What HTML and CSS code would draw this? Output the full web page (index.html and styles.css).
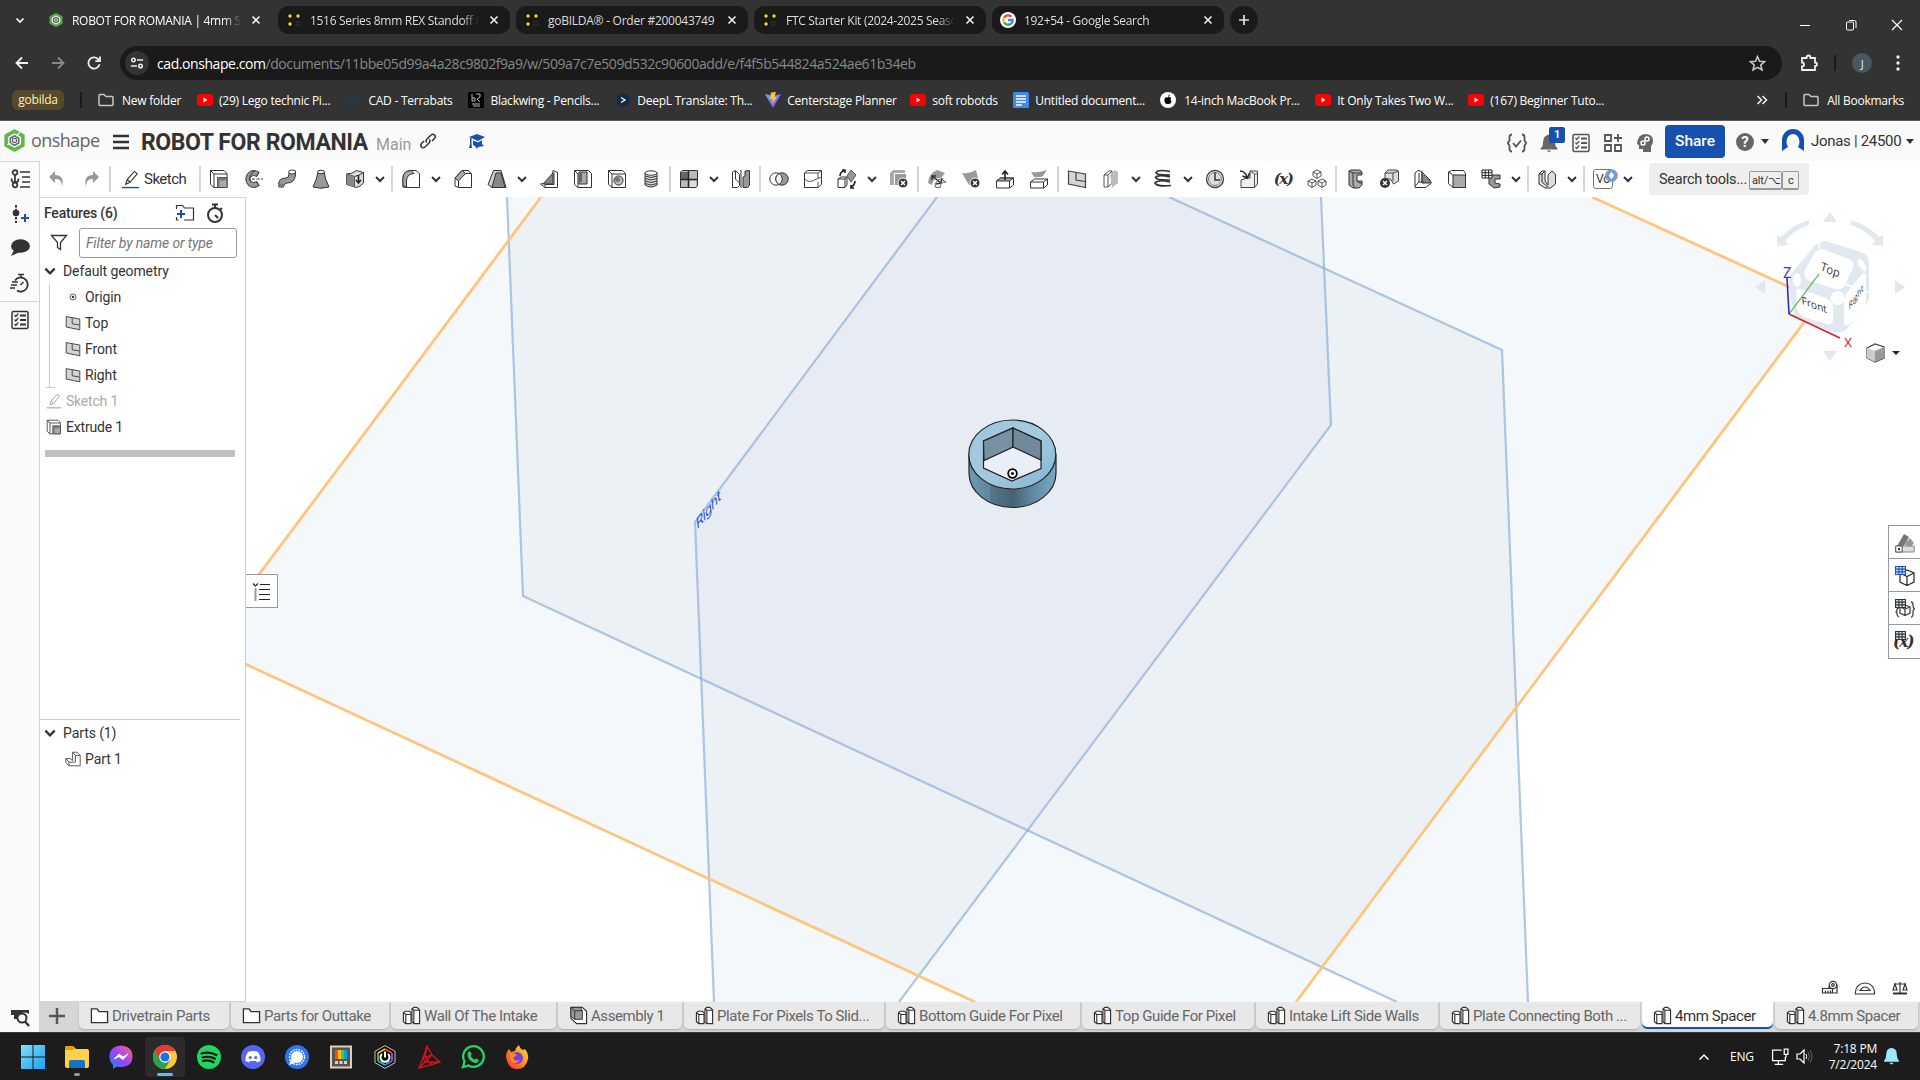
FILE: index.html
```html
<!DOCTYPE html>
<html lang="en">
<head>
<meta charset="utf-8">
<title>ROBOT FOR ROMANIA | 4mm Spacer</title>
<link rel="stylesheet" href="styles.css">
</head>
<body>
<svg class="defs" width="0" height="0">
  <defs>
    <linearGradient id="gWin" x1="0" y1="0" x2="1" y2="1"><stop offset="0" stop-color="#7fe0fb"/><stop offset="1" stop-color="#1da1f2"/></linearGradient>
    <linearGradient id="gMsg" x1="0" y1="1" x2="1" y2="0"><stop offset="0" stop-color="#0a8bff"/><stop offset=".5" stop-color="#a040ff"/><stop offset="1" stop-color="#ff6a68"/></linearGradient>
    <linearGradient id="gFox" x1="1" y1="0" x2="0" y2="1"><stop offset="0" stop-color="#ffe63d"/><stop offset=".5" stop-color="#ff8a1f"/><stop offset="1" stop-color="#f0264e"/></linearGradient>
    <linearGradient id="gVite" x1="0" y1="0" x2="1" y2="1"><stop offset="0" stop-color="#41c4ff"/><stop offset="1" stop-color="#b02cfe"/></linearGradient>
    <linearGradient id="gRing" x1="0" y1="0" x2="1" y2="0"><stop offset="0" stop-color="#6d9ab5"/><stop offset=".24" stop-color="#61869c"/><stop offset=".25" stop-color="#567689"/><stop offset=".5" stop-color="#486273"/><stop offset=".75" stop-color="#618ba5"/><stop offset="1" stop-color="#7aa9c4"/></linearGradient>
    <linearGradient id="gTop" x1="0" y1="0" x2="1" y2="1"><stop offset="0" stop-color="#9fc6de"/><stop offset=".5" stop-color="#a4cadf"/><stop offset="1" stop-color="#80b5d3"/></linearGradient>
    <clipPath id="clipTop"><path d="M541 197L200 653.500V643l775 359h321l524-701-228-104z"/></clipPath>
    <clipPath id="clipFront"><path d="M507 197l16 399 874 406h131l-26-652-333-153z"/></clipPath>
  </defs>
  <symbol id="chev" viewBox="0 0 12 12"><path d="M2 4l4 4 4-4" fill="none" stroke="#333" stroke-width="2"/></symbol>
  <symbol id="hex" viewBox="0 0 20 22"><path d="M10 2l8 4.600v9L10 20l-8-4.500V6.600z" fill="none" stroke="#5cb947" stroke-width="3.400"/><path d="M10 6.500l4 2.300v4.600l-4 2.300-4-2.300V8.800z" fill="none" stroke="#63666a" stroke-width="1.500"/><circle cx="10" cy="11" r="2" fill="none" stroke="#63666a" stroke-width="1.200"/><path d="M15 3l-3 4M3 15l4-1" stroke="#fff" stroke-width="1"/></symbol>
  <symbol id="hexd" viewBox="0 0 20 22"><path d="M10 1l9 5v10l-9 5-9-5V6z" fill="#4fa843"/><path d="M10 5.500l5 2.800v5.400l-5 2.800-5-2.800V8.300z" fill="#555" stroke="#e8e8e8" stroke-width="1.800"/><circle cx="10" cy="11" r="2" fill="none" stroke="#eee" stroke-width="1.200"/></symbol>
  <symbol id="gb" viewBox="0 0 16 16"><g fill="#161616"><circle cx="4" cy="4" r="3.500"/><circle cx="12" cy="4" r="3.500"/><circle cx="4" cy="12" r="3.500"/></g><g fill="#ffe000"><circle cx="4" cy="4" r="1.700"/><circle cx="12" cy="4" r="1.700"/><circle cx="4" cy="12" r="1.700"/></g><path d="M9 10h6M9 13h6" stroke="#333"/></symbol>
  <symbol id="yt" viewBox="0 0 16 16"><rect y="2" width="16" height="12" rx="3" fill="#f00"/><path d="M6.500 5.500v5l4-2.500z" fill="#fff"/></symbol>
  <symbol id="cfolder" viewBox="0 0 16 16"><path d="M1 3.500q0-1 1-1h4l2 2h6q1 0 1 1v7q0 1-1 1H2q-1 0-1-1z" fill="none" stroke="#c7c7c7" stroke-width="1.500"/></symbol>
  <symbol id="x" viewBox="0 0 10 10"><path d="M1.500 1.500l7 7M8.500 1.500l-7 7" stroke="currentColor" stroke-width="1.600"/></symbol>
  <symbol id="extrude" viewBox="0 0 20 20"><path d="M1.500 1.500H15l3 3v14H5l-3.500-3z" fill="#fff" stroke="#333"/><path d="M1.500 1.500L5 5v13.500M5 5h13" fill="none" stroke="#333"/><path d="M8.500 8.500h9.500v10H8.500z" fill="#aaa" stroke="#444"/><path d="M8.500 8.500h9.500l-2 3h-5.500v7h-2z" fill="#777"/></symbol>
  <symbol id="revolve" viewBox="0 0 20 20"><path d="M16 3.500A8 8.500 0 1 0 16 16.500l-2.500-4a4 3.500 0 1 1 0-5z" fill="#999" stroke="#333"/><path d="M12 1.500Q5 6 7.500 12.500M16 3.500l-2.500 4M16 16.500l-2.500-4" fill="none" stroke="#333"/><path d="M9 10h11" stroke="#333" stroke-dasharray="3 1.500"/></symbol>
  <symbol id="sweep" viewBox="0 0 20 20"><path d="M2 18q-2-9 7-9 3 0 3-4V3l6.500-1v4q-1 8-8 8-4 0-4 4z" fill="#999" stroke="#333"/><ellipse cx="15.200" cy="3" rx="3.500" ry="2" fill="#fff" stroke="#333"/><ellipse cx="4.300" cy="16.500" rx="2.500" ry="2" fill="#777"/></symbol>
  <symbol id="loft" viewBox="0 0 20 20"><path d="M7 3Q6 10 2 18q8 2.500 16 0-4-8-5-15z" fill="#999" stroke="#333"/><ellipse cx="10" cy="3" rx="3.500" ry="1.800" fill="#eee" stroke="#333"/></symbol>
  <symbol id="thicken" viewBox="0 0 20 20"><path d="M1.500 5q6 0 10-3.500l7 2V14q-4 4-7 4.500l-10-3z" fill="#ddd" stroke="#333"/><path d="M1.500 5l8 2.500q5-1 9-4M9.500 7.500V18" fill="none" stroke="#333"/><path d="M1.500 5l8 2.500V18l-8-2.500z" fill="#888"/><path d="M13.500 6v7m-2.500-2l2.500 3 2.500-3" fill="none" stroke="#222" stroke-width="1.600"/></symbol>
  <symbol id="fillet" viewBox="0 0 20 20"><path d="M2 18V9q0-7 8-7.500h5l3.500 3V18.500H5.500z" fill="#fff" stroke="#333"/><path d="M2 9q0-7 8-7.500l3 3Q5.500 5 5.500 12v6L2 17z" fill="#aaa" stroke="#333"/></symbol>
  <symbol id="chamfer" viewBox="0 0 20 20"><path d="M2 17V9l7-7.500h6l3.500 3v14H5.500z" fill="#fff" stroke="#333"/><path d="M2 9l7-7.500 3.500 3L5.500 12z" fill="#aaa" stroke="#333"/><path d="M5.500 12v6.500M12 4.500h6" stroke="#333"/></symbol>
  <symbol id="draft" viewBox="0 0 20 20"><path d="M6.500 1.500H14l5 17H5l-4-3z" fill="#ccc" stroke="#333"/><path d="M9 4h5l4 14.500H5z" fill="#888" stroke="#333"/></symbol>
  <symbol id="rib" viewBox="0 0 20 20"><path d="M14 1.500l4.500 2v15H6L1.500 15l11-2z" fill="#fff" stroke="#333"/><path d="M14 4v11H4Z" fill="#888" stroke="#333"/><path d="M6 18.500v-3h9v-12" fill="none" stroke="#333"/></symbol>
  <symbol id="shell" viewBox="0 0 20 20"><path d="M1.500 1.500h14l3 3v14H5l-3.500-3z" fill="#fff" stroke="#333"/><path d="M6 3h8v12H6z" fill="#aaa" stroke="#333"/><path d="M6 3h3v10H6z" fill="#666"/><path d="M2 2l3 3v13" fill="none" stroke="#333"/></symbol>
  <symbol id="hole" viewBox="0 0 20 20"><path d="M1.500 1.500h14l3 3v14H5l-3.500-3z" fill="#fff" stroke="#333"/><path d="M1.500 1.500L5 5v13.500M5 5h13" fill="none" stroke="#333"/><circle cx="11.500" cy="11.500" r="4.600" fill="#bbb" stroke="#333"/><circle cx="10.500" cy="10.500" r="2.500" fill="#777"/></symbol>
  <symbol id="thread" viewBox="0 0 20 20"><path d="M4 4v12q6 4 12 0V4z" fill="#ddd" stroke="#333"/><path d="M4 7q6 3 12 0M4 9.500q6 3 12 0M4 12q6 3 12 0M4 14.500q6 3 12 0" fill="none" stroke="#333"/><ellipse cx="10" cy="4" rx="6" ry="2.200" fill="#fff" stroke="#333"/></symbol>
  <symbol id="pattern" viewBox="0 0 20 20"><path d="M1.500 3l2-1.500h15v15L17 18.500H1.500z" fill="#bbb" stroke="#333"/><path d="M2 3h7v7H2z" fill="#666"/><path d="M10.500 11.500h6.500v6.500h-6.500z" fill="#ddd"/><path d="M9.500 2v16M2 10.500h16" stroke="#222" stroke-width="1.500"/></symbol>
  <symbol id="mirror" viewBox="0 0 20 20"><path d="M1.500 3l3-1.500 4 4v11l-2 2h-5z" fill="#fff" stroke="#333"/><path d="M12 8l2-1V2l4.500-.5v15l-2 2h-4.500z" fill="#999" stroke="#333"/><path d="M10 1v18" stroke="#777" stroke-width="1.500"/><path d="M4.500 2v8l4 4" fill="none" stroke="#333"/></symbol>
  <symbol id="boolean" viewBox="0 0 20 20"><circle cx="7" cy="10" r="6.200" fill="#fff" stroke="#333"/><circle cx="13" cy="10" r="6.200" fill="#999" stroke="#333"/><path d="M10 4.500a6.200 6.200 0 0 1 0 11 6.200 6.200 0 0 1 0-11z" fill="#eee" stroke="#333"/></symbol>
  <symbol id="split" viewBox="0 0 20 20"><path d="M1.500 4l3-2.500h14v14l-3.500 3H1.500z" fill="#fff" stroke="#333"/><path d="M1.500 4H15l3.500-2.500M15 4v5M15 13v5M1.500 10q4 4 8 2t9-4" fill="none" stroke="#555"/></symbol>
  <symbol id="transform" viewBox="0 0 20 20"><path d="M1 10l3-2h6v8l-2 2.500H1zM1 10h7v8M8 10l2-2" fill="#fff" stroke="#333"/><path d="M14 1l5 5-5 7-4-6z" fill="#999" stroke="#555"/><path d="M3 7q0-4 4-5M5 1h3v3M18 12q0 4-4 6M17 19h-3v-3" fill="none" stroke="#222" stroke-width="1.600"/></symbol>
  <symbol id="delpart" viewBox="0 0 20 20"><path d="M1 4l3-3h12v3H5v12H1z" fill="#aaa"/><path d="M6 5h11v11H6z" fill="#999"/><circle cx="14" cy="14" r="5" fill="#333" stroke="#fff"/><path d="M12 12l4 4m0-4l-4 4" stroke="#fff" stroke-width="1.500"/></symbol>
  <symbol id="modfillet" viewBox="0 0 20 20"><path d="M1 14Q2 4 10 1l8 3-4 5Q6 8 5 16z" fill="#999"/><path d="M8 18q0-7 6-8l5 3q-6 0-6 6z" fill="#eee" stroke="#666"/><path d="M5 7l9 7M9 15l5-1 1-5M5 11V7h4" fill="none" stroke="#333" stroke-width="1.400"/></symbol>
  <symbol id="delface" viewBox="0 0 20 20"><path d="M1 4q6 1 14-3l3 12q-5 0-10 3z" fill="#999"/><circle cx="14" cy="14" r="5" fill="#333" stroke="#fff"/><path d="M12 12l4 4m0-4l-4 4" stroke="#fff" stroke-width="1.500"/></symbol>
  <symbol id="moveface" viewBox="0 0 20 20"><path d="M1.500 12l4-3h13v7l-4 3h-13z" fill="#fff" stroke="#333"/><path d="M1.500 12l4-3h13l-4 3z" fill="#aaa" stroke="#333"/><path d="M14.500 12v7" stroke="#333"/><path d="M10 11V3M7 5.500L10 2l3 3.500" fill="none" stroke="#222" stroke-width="1.600"/></symbol>
  <symbol id="repface" viewBox="0 0 20 20"><path d="M1.500 13l4-3h13v6l-4 3h-13zM1.500 13h13l4-3M14.500 13v6" fill="#fff" stroke="#333"/><path d="M2 3q8 1 16-2l-4 6q-4 2-9 1z" fill="#999"/></symbol>
  <symbol id="plane" viewBox="0 0 20 20"><path d="M1.500 2l17 3v13.500l-17-3.500z" fill="#d4d4d4" stroke="#444" stroke-width="1.200"/><path d="M9 3.500v7.500l9 1.500" fill="none" stroke="#444" stroke-width="1.200"/></symbol>
  <symbol id="sheet" viewBox="0 0 20 20"><path d="M3 6l5-4h3v12l-4 4H3z" fill="#fff" stroke="#555"/><path d="M9 6l5-5 3 2v11l-6 5z" fill="#bbb"/><path d="M3 6h4l4-4M7 6v12" fill="none" stroke="#555"/></symbol>
  <symbol id="helix" viewBox="0 0 20 20"><path d="M17 2.500Q5 0 3 3.500 3 6 17 6M17 8Q5 5 2.500 8.500q1 3 14.500 2.500M17 13Q5 10 2 14q2 4 16 2.500" fill="none" stroke="#333" stroke-width="1.700"/></symbol>
  <symbol id="clock" viewBox="0 0 20 20"><circle cx="10" cy="10" r="8.500" fill="#fff" stroke="#444" stroke-width="1.400"/><circle cx="10" cy="10" r="6.500" fill="#ddd" stroke="#777"/><path d="M10 3.500V11h5" fill="none" stroke="#333" stroke-width="1.500"/></symbol>
  <symbol id="derived" viewBox="0 0 20 20"><path d="M8 9h3V2h7.500v13l-3 3.500H2V11z" fill="#eee" stroke="#444"/><path d="M15.500 5v13M11 2l4.500 3h3" fill="none" stroke="#555"/><path d="M1 2q5 0 7 6M3.500 7l5 2 2-5" fill="none" stroke="#222" stroke-width="1.500"/></symbol>
  <symbol id="cubes" viewBox="0 0 20 20"><g fill="#fff" stroke="#444" stroke-width=".9"><path d="M10 1l4 2v4l-4 2.500L6 7V3zM6 3l4 2 4-2M10 5v4.500"/><path d="M5 10l4 2v4l-4 2.500L1 16v-4zM1 12l4 2 4-2M5 14v4.500"/><path d="M15 10l4 2v4l-4 2.500L11 16v-4zM11 12l4 2 4-2M15 14v4.500"/></g></symbol>
  <symbol id="smetal" viewBox="0 0 20 20"><path d="M4 2l2-1h9l2 2v3h-5v6h5v4l-3 3H8l-4-3z" fill="#aaa" stroke="#333"/><path d="M4 2l4 2h9M8 4v12l2 3" fill="none" stroke="#333"/><path d="M12 12l3 2h2" fill="none" stroke="#333"/></symbol>
  <symbol id="smdel" viewBox="0 0 20 20"><path d="M6 4l3-3h9l1.500 2v9l-5 3-3-5H6z" fill="#ddd" stroke="#444"/><path d="M6 4h8l5.500-2M14 4v8" fill="none" stroke="#444"/><circle cx="6" cy="14" r="5" fill="#333"/><path d="M4 12l4 4m0-4l-4 4" stroke="#fff" stroke-width="1.500"/></symbol>
  <symbol id="flange" viewBox="0 0 20 20"><path d="M2 4l3-2.500 4 1V13h9l.5 1-6 4.500H2z" fill="#fff" stroke="#333"/><path d="M9 3l8 8v3H9z" fill="#888" stroke="#333"/><path d="M6 4v9l-4 4M6 13h5" fill="none" stroke="#333"/></symbol>
  <symbol id="block" viewBox="0 0 20 20"><path d="M1.500 3l3-1.500h12l2 3v14H6l-4.500-4z" fill="#fff" stroke="#333"/><path d="M6 6h12.500v12.500H6z" fill="#aaa" stroke="#333"/><path d="M1.500 3L6 6" stroke="#333"/></symbol>
  <symbol id="smtable" viewBox="0 0 20 20"><path d="M8 6h11v4h-5v4l5 1v3l-6 1-5-4z" fill="#999" stroke="#333"/><path d="M1 1h10v8H1zM1 3.700h10M1 6.400h10M4.300 1v8M7.600 1v8" fill="#fff" stroke="#222"/></symbol>
  <symbol id="frame" viewBox="0 0 20 20"><path d="M2 5l3-3h3v10l3 4V6l4-4 3.500 3v10l-5 4H8l-6-4z" fill="#ddd" stroke="#333"/><path d="M2 5h3l3-3M5 5v8l6 5" fill="none" stroke="#333"/></symbol>
  <symbol id="sk" viewBox="0 0 20 20"><path d="M5 15l1.500-5L14 1.500l3 2.500-7.500 9L5 15zM6.500 10l3 2.800" fill="#fff" stroke="#333" stroke-width="1.200"/><path d="M1 18.500h18" stroke="#1651b0" stroke-width="1.500"/></symbol>
  <symbol id="watch" viewBox="0 0 20 20"><circle cx="10" cy="12" r="7" fill="none" stroke="#333" stroke-width="2"/><path d="M7 1.500h6M10 1.500v4M10 12l3 3M15.500 5l1.500 1.500" stroke="#333" stroke-width="2"/></symbol>
  <symbol id="list" viewBox="0 0 20 20"><rect x="2" y="1.500" width="16" height="17" rx="1.500" fill="none" stroke="currentColor" stroke-width="1.500"/><path d="M10 5.500h6M10 10h6M10 14.500h6" stroke="currentColor" stroke-width="2"/><path d="M4.500 5l1.300 1.500 2.500-3M4.500 9.500L5.800 11l2.500-3M4.500 14l1.300 1.500 2.500-3" fill="none" stroke="currentColor" stroke-width="1.200"/></symbol>
  <symbol id="part" viewBox="0 0 20 20"><path d="M1.500 7l2-1.500h4l2 1.500v11.500H4l-2.500-2zM1.500 7L4 9h5.500M4 9v9.500" fill="#fff" stroke="#333" stroke-width="1.200"/><path d="M10.500 3l2-1.500h3l3 2.500v14.500h-6l-2-2zM10.500 3l2 1.500h6M12.500 4.500v14" fill="#fff" stroke="#333" stroke-width="1.200"/></symbol>
  <symbol id="fold" viewBox="0 0 20 20"><path d="M1.500 3h6l2 3h9v11.500h-17z" fill="#fff" stroke="#333" stroke-width="1.400"/></symbol>
  <symbol id="asm" viewBox="0 0 20 20"><path d="M2 1.500h12l4.500 4V18.500H8L2 13z" fill="#fff" stroke="#333" stroke-width="1.200"/><path d="M2 1.500h10L14 5v9H6l-4-3z" fill="#999" stroke="#333"/><path d="M6 5h8M6 5v9M2 1.500L6 5" stroke="#333"/></symbol>
  <symbol id="grid" viewBox="0 0 12 10"><path d="M.5.500h11v9H.5zM.5 3.500h11M.5 6.500h11M4.200.500v9M7.800.500v9" stroke="currentColor" fill="#cfe6fa" stroke-width="1.200"/></symbol>
</svg>

<header class="browser">
  <div class="tabstrip">
    <svg class="tabdrop" viewBox="0 0 10 10"><path d="M1.500 3.500L5 7l3.500-3.500" fill="none" stroke="#fff" stroke-width="1.600"/></svg>
    <div class="tab active"><svg class="fav"><use href="#hexd"/></svg><span>ROBOT FOR ROMANIA | 4mm S</span><svg class="close"><use href="#x"/></svg></div>
    <div class="tab"><svg class="fav"><use href="#gb"/></svg><span>1516 Series 8mm REX Standoff (</span><svg class="close"><use href="#x"/></svg></div>
    <div class="tab t3"><svg class="fav"><use href="#gb"/></svg><span>goBILDA® - Order #200043749</span><svg class="close"><use href="#x"/></svg></div>
    <div class="tab"><svg class="fav"><use href="#gb"/></svg><span>FTC Starter Kit (2024-2025 Seaso</span><svg class="close"><use href="#x"/></svg></div>
    <div class="tab"><svg class="fav" viewBox="0 0 16 16"><circle cx="8" cy="8" r="8" fill="#fff"/><g fill="none" stroke-width="2.300"><path d="M4 5.600A4.700 4.700 0 0 1 11.400 4.700" stroke="#ea4335"/><path d="M4 5.600a4.700 4.700 0 0 0 0 4.800" stroke="#fbbc05"/><path d="M4 10.400a4.700 4.700 0 0 0 7 1.300" stroke="#34a853"/><path d="M11 11.700A4.700 4.700 0 0 0 12.700 8H8" stroke="#4285f4"/></g></svg><span>192+54 - Google Search</span><svg class="close"><use href="#x"/></svg></div>
    <div class="newtab"><svg width="12" height="12" viewBox="0 0 12 12"><path d="M6 1v10M1 6h10" stroke="#e0e0e0" stroke-width="1.700"/></svg></div>
    <div class="winbtns">
      <svg viewBox="0 0 12 12"><path d="M1 6.500h10" stroke="#fff"/></svg>
      <svg viewBox="0 0 12 12"><path d="M1.500 4q0-1 1-1h5q1 0 1 1v6q0 1-1 1h-5q-1 0-1-1zM4 1.500h5.500q1.500 0 1.500 1.500v6" fill="none" stroke="#fff"/></svg>
      <svg viewBox="0 0 12 12"><path d="M1 1l10 10M11 1L1 11" stroke="#fff" stroke-width="1.200"/></svg>
    </div>
  </div>
  <div class="address">
    <svg class="nav" viewBox="0 0 16 16"><path d="M14 8H3M8 2.500L2.500 8 8 13.500" fill="none" stroke="#eee" stroke-width="1.800"/></svg>
    <svg class="nav" viewBox="0 0 16 16"><path d="M2 8h11M8 2.500L13.500 8 8 13.500" fill="none" stroke="#888" stroke-width="1.800"/></svg>
    <svg class="nav" viewBox="0 0 16 16"><path d="M13.500 9.200A5.600 5.600 0 1 1 12 4l1.500 1.500M14 1.500v4.700H9.300" fill="none" stroke="#eee" stroke-width="1.800"/></svg>
    <div class="omni">
      <div class="site"><svg viewBox="0 0 16 16" width="14" height="14"><g fill="none" stroke="#eee" stroke-width="1.800"><circle cx="4" cy="4.500" r="2"/><path d="M8 4.500h7M1 11.500h7"/><circle cx="12" cy="11.500" r="2"/></g></svg></div>
      <div class="url"><b>cad.onshape.com</b>/documents/11bbe05d99a4a28c9802f9a9/w/509a7c7e509d532c90600add/e/f4f5b544824a524ae61b34eb</div>
      <svg class="star" viewBox="0 0 16 16"><path d="M8 1.500l1.900 4.400 4.800.4-3.600 3.100 1.100 4.700L8 11.600l-4.200 2.500 1.100-4.700L1.300 6.300l4.800-.4z" fill="none" stroke="#c7c7c7" stroke-width="1.500"/></svg>
    </div>
    <svg class="ext" viewBox="0 0 18 18"><path d="M2 4h4.500q0-2.500 2-2.500t2 2.500H15v4.500q2 0 2 1.700t-2 1.800V16H2v-3.500q2 0 2-2t-2-2z" fill="none" stroke="#eee" stroke-width="1.800"/></svg>
    <i class="vline"></i>
    <div class="me">J</div>
    <svg class="dots" viewBox="0 0 4 16"><g fill="#eee"><circle cx="2" cy="2" r="1.700"/><circle cx="2" cy="8" r="1.700"/><circle cx="2" cy="14" r="1.700"/></g></svg>
  </div>
  <div class="bookmarks">
    <div class="group">gobilda</div><i class="vline"></i>
    <div class="bm"><svg><use href="#cfolder"/></svg><span>New folder</span></div>
    <div class="bm"><svg><use href="#yt"/></svg><span>(29) Lego technic Pi...</span></div>
    <div class="bm"><svg viewBox="0 0 16 16"><path d="M1 3l3.500 10L8 4l3.500 9L15 3" fill="none" stroke="#26394b" stroke-width="2"/></svg><span>CAD - Terrabats</span></div>
    <div class="bm"><svg viewBox="0 0 16 16"><path d="M0 0h16v16H0z"/><path d="M4 2v7h3V6H4M8 2h4v3l-3 2 3 3M4 12h8M5 14h7" stroke="#bbb" fill="none"/></svg><span>Blackwing - Pencils...</span></div>
    <div class="bm"><svg viewBox="0 0 16 16"><path d="M8 1l6 3.500v7L8 15l-6-3.500v-7z" fill="#0f2b46"/><path d="M6 5.500l4 2.500-4 2.500" fill="none" stroke="#fff" stroke-width="1.300"/></svg><span>DeepL Translate: Th...</span></div>
    <div class="bm"><svg viewBox="0 0 16 16"><path d="M0 2l8 14 8-14-8 2z" fill="url(#gVite)"/><path d="M6 .5L11 0 9.500 5H12l-5 7 1-5H5z" fill="#ffc62b"/></svg><span>Centerstage Planner</span></div>
    <div class="bm"><svg><use href="#yt"/></svg><span>soft robotds</span></div>
    <div class="bm"><svg viewBox="0 0 16 16"><rect width="16" height="16" rx="1.500" fill="#4285f4"/><path d="M3 4h10M3 7h10M3 10h10M3 13h6" stroke="#fff" stroke-width="1.500"/></svg><span>Untitled document...</span></div>
    <div class="bm"><svg viewBox="0 0 16 16"><circle cx="8" cy="8" r="8" fill="#fff"/><path d="M8 5.500q2-1 3.200.6-1.600 1.500.4 3.400Q10.200 13 8 11.800 5.600 13 4.500 9.500 3.900 4.500 8 5.500zM8 5q0-2 1.800-2.500Q10 4.500 8 5z"/></svg><span>14-inch MacBook Pr...</span></div>
    <div class="bm"><svg><use href="#yt"/></svg><span>It Only Takes Two W...</span></div>
    <div class="bm"><svg><use href="#yt"/></svg><span>(167) Beginner Tuto...</span></div>
    <svg class="more" viewBox="0 0 12 12"><path d="M1.500 2l4 4-4 4M6.500 2l4 4-4 4" fill="none" stroke="#eee" stroke-width="1.600"/></svg>
    <i class="vline"></i>
    <div class="bm all"><svg><use href="#cfolder"/></svg><span>All Bookmarks</span></div>
  </div>
</header>

<div class="titlebar">
  <svg class="logo"><use href="#hex"/></svg><span class="brand">onshape</span>
  <svg class="burger" viewBox="0 0 16 16"><path d="M0 2h16M0 8h16M0 14h16" stroke="#333" stroke-width="2.500"/></svg>
  <h1>ROBOT FOR ROMANIA</h1><span class="main">Main</span>
  <svg class="link" viewBox="0 0 16 16"><path d="M7 9.500q-2-1.500 0-3.500l4-4q2-1.500 3.500 0t0 3.500L12 8M9 6.500q2 1.500 0 3.500l-4 4q-2 1.500-3.500 0t0-3.500L4 8" fill="none" stroke="#333" stroke-width="1.500"/></svg>
  <svg class="cap" viewBox="0 0 16 16"><path d="M0 4l8-3 8 3-7 4zM4 7.500l5 2L13 7v4l2 2-6 1-1 2-2-3-2-1zM1 5h1.500v6L3 15H0l1-4z" fill="#1651b0"/></svg>
  <div class="acts">
    <svg width="20" height="20" viewBox="0 0 20 20"><path d="M5 1.500q-2.500 0-2.500 2.500v3.500L.8 10l1.700 2.500V16q0 2.500 2.500 2.500M15 1.500q2.500 0 2.500 2.500v3.500l1.700 2.500-1.700 2.500V16q0 2.500-2.500 2.500M6 10l3 3.500 5-6" fill="none" stroke="#555" stroke-width="1.800"/></svg>
    <div class="bell"><svg width="20" height="20" viewBox="0 0 20 20"><path d="M10 1.500q6 1 6 8 0 4 2.500 6v1h-17v-1Q4 14 4 9.500q0-7 6-8zM8 17.500h4q-2 3-4 0z" fill="#666"/></svg><b>1</b></div>
    <svg class="l"><use href="#list"/></svg>
    <svg width="20" height="20" viewBox="0 0 20 20"><path d="M2 2h6v6H2zM2 12h6v6H2zM12 12h6v6h-6zM15 1v8M11 5h8" fill="none" stroke="#555" stroke-width="1.800"/></svg>
    <svg width="20" height="20" viewBox="0 0 20 20"><path d="M10 1q8 0 8 7 0 3-2 5v6H8v-3H4v-4L2 11q1-10 8-10z" fill="#666"/><circle cx="8" cy="10" r="2" fill="none" stroke="#fff" stroke-width="1.500"/><circle cx="12" cy="6" r="2" fill="none" stroke="#fff" stroke-width="1.500"/></svg>
  </div>
  <div class="share">Share</div>
  <div class="help">?</div><i class="caret"></i>
  <svg class="avatar" viewBox="0 0 24 24"><path d="M1 22V11a11 11 0 0 1 22 0v11l-6-4a6.500 8 0 1 0-10 0z" fill="#1651b0"/></svg>
  <span class="user">Jonas | 24500</span><i class="caret c2"></i>
</div>

<div class="app">
  <nav class="rail">
    <svg class="r0" viewBox="0 0 20 20"><g fill="none" stroke="#333" stroke-width="1.700"><circle cx="5" cy="3.500" r="2.400"/><path d="M5 6v7.500M1.500 9.500q0 4 3.500 4t3.500-4"/><circle cx="5" cy="16" r="2.300"/><path d="M10 3h10M12 8h8M12 13h8M10 18h10"/></g></svg>
    <svg class="r1" viewBox="0 0 20 20"><path d="M6 1v18" stroke="#333" stroke-width="2" stroke-dasharray="2.500 1.500"/><circle cx="6" cy="9" r="3.300" fill="#333"/><path d="M15 10v8M11 14h8" stroke="#1651b0" stroke-width="2"/></svg>
    <svg class="r2" viewBox="0 0 20 20"><ellipse cx="10.500" cy="8" rx="9.500" ry="6.800" fill="#333"/><path d="M4 12l-3 6 9-4z" fill="#333"/></svg>
    <svg class="r3" viewBox="0 0 20 20"><path d="M5 7.500a7 7 0 1 1 2 10" fill="none" stroke="#333" stroke-width="1.800"/><path d="M8 1.500h6M11 1.500v3M10.500 12l3-3M2 9h6M1 12h6M0 15h5" stroke="#333" stroke-width="1.500"/></svg>
    <i></i>
    <svg class="r4"><use href="#list"/></svg>
    <svg class="r5" viewBox="0 0 20 20"><path d="M1 2h18v4q-7-4-11 3v2H4V7H1z" fill="#333"/><circle cx="12" cy="10" r="4.500" fill="#fff" stroke="#333" stroke-width="2"/><path d="M15 13.500l4 4.500" stroke="#333" stroke-width="2.500"/></svg>
  </nav>
  <div class="work">
    <div class="toolbar">
      <div class="c"><svg viewBox="0 0 20 20"><path d="M8 2L2 8l6 6v-4q7-1 7 8 3-12-7-12z" fill="#999"/></svg></div>
      <div class="c"><svg viewBox="0 0 20 20"><path d="M12 2l6 6-6 6v-4Q5 9 5 18 2 6 12 6z" fill="#999"/></svg></div><i></i>
      <div class="sketch"><svg><use href="#sk"/></svg>Sketch</div><i></i>
      <div class="c"><svg><use href="#extrude"/></svg></div><div class="c"><svg><use href="#revolve"/></svg></div><div class="c"><svg><use href="#sweep"/></svg></div><div class="c"><svg><use href="#loft"/></svg></div><div class="c"><svg><use href="#thicken"/></svg></div><div class="v"><svg><use href="#chev"/></svg></div><i></i>
      <div class="c"><svg><use href="#fillet"/></svg></div><div class="v"><svg><use href="#chev"/></svg></div><div class="c"><svg><use href="#chamfer"/></svg></div><div class="c"><svg><use href="#draft"/></svg></div><div class="v"><svg><use href="#chev"/></svg></div><div class="c"><svg><use href="#rib"/></svg></div><div class="c"><svg><use href="#shell"/></svg></div><div class="c"><svg><use href="#hole"/></svg></div><div class="c"><svg><use href="#thread"/></svg></div><i></i>
      <div class="c"><svg><use href="#pattern"/></svg></div><div class="v"><svg><use href="#chev"/></svg></div><div class="c"><svg><use href="#mirror"/></svg></div><i></i>
      <div class="c"><svg><use href="#boolean"/></svg></div><div class="c"><svg><use href="#split"/></svg></div><div class="c"><svg><use href="#transform"/></svg></div><div class="v"><svg><use href="#chev"/></svg></div><div class="c"><svg><use href="#delpart"/></svg></div><i></i>
      <div class="c"><svg><use href="#modfillet"/></svg></div><div class="c"><svg><use href="#delface"/></svg></div><div class="c"><svg><use href="#moveface"/></svg></div><div class="c"><svg><use href="#repface"/></svg></div><i></i>
      <div class="c"><svg><use href="#plane"/></svg></div><div class="c"><svg><use href="#sheet"/></svg></div><div class="v"><svg><use href="#chev"/></svg></div><div class="c"><svg><use href="#helix"/></svg></div><div class="v"><svg><use href="#chev"/></svg></div><div class="c"><svg><use href="#clock"/></svg></div><div class="c"><svg><use href="#derived"/></svg></div><div class="c var">(x)</div><div class="c"><svg><use href="#cubes"/></svg></div><i></i>
      <div class="c"><svg><use href="#smetal"/></svg></div><div class="c"><svg><use href="#smdel"/></svg></div><div class="c"><svg><use href="#flange"/></svg></div><div class="c"><svg><use href="#block"/></svg></div><div class="c"><svg><use href="#smtable"/></svg></div><div class="v"><svg><use href="#chev"/></svg></div><i></i>
      <div class="c"><svg><use href="#frame"/></svg></div><div class="v"><svg><use href="#chev"/></svg></div><i></i>
      <div class="c"><div class="vo">Vo<svg viewBox="0 0 12 12"><circle cx="6" cy="6" r="5.800" fill="#6f9fd3"/><path d="M6 2.500L8.500 6 6 9.500 3.500 6z" fill="#fff"/></svg></div></div><div class="v"><svg><use href="#chev"/></svg></div>
      <div class="search"><span>Search tools...</span><kbd>alt/⌥</kbd><kbd>c</kbd></div>
    </div>
    <div class="body">
      <aside class="panel">
        <div class="head"><span>Features (6)</span>
          <svg width="20" height="18" viewBox="0 0 20 18"><path d="M1.500 5V1.500h6l2 2.500h9v12H9M1.500 13v3h2" fill="none" stroke="#333" stroke-width="1.200"/><path d="M6 6v8M2 10h8" stroke="#1651b0" stroke-width="2"/></svg>
          <svg width="20" height="20"><use href="#watch"/></svg></div>
        <div class="filter"><svg width="18" height="18" viewBox="0 0 18 18"><path d="M1.500 1.500h15l-6 7v7l-3-2v-5z" fill="none" stroke="#333" stroke-width="1.300"/></svg><div class="input">Filter by name or type</div></div>
        <div class="row grp"><svg class="tw"><use href="#chev"/></svg>Default geometry</div>
        <div class="kids">
          <div class="row"><svg viewBox="0 0 20 20"><circle cx="10" cy="10" r="3.800" fill="#fff" stroke="#555" stroke-width="1.200"/><circle cx="10" cy="10" r="1.600" fill="#333"/></svg>Origin</div>
          <div class="row"><svg><use href="#plane"/></svg>Top</div>
          <div class="row"><svg><use href="#plane"/></svg>Front</div>
          <div class="row"><svg><use href="#plane"/></svg>Right</div>
        </div>
        <div class="row feat dim"><svg><use href="#sk"/></svg>Sketch 1</div>
        <div class="row feat"><svg><use href="#extrude"/></svg>Extrude 1</div>
        <div class="bar"></div>
        <div class="parts">
          <div class="row grp"><svg class="tw"><use href="#chev"/></svg>Parts (1)</div>
          <div class="row p1"><svg viewBox="0 0 20 20"><path d="M9.500 1.500H15l4 4v13H5l-4-4V9.500h5.500l3 2.500zM9.500 1.500l3.500 4h6M13 5.500V14H5L1 9.500M5 14v4.500" fill="#fff" stroke="#555" stroke-width="1.200"/></svg>Part 1</div>
        </div>
      </aside>
      <main class="view">
        <svg class="scene" viewBox="246 197 1674 805" width="1674" height="805">
          <g fill="#f4f8fb">
            <polygon points="541,197 200,653.500 200,643 975,1002 1296,1002 1820,301 1592,197"/>
            <polygon points="507,197 523,596 1397,1002 1528,1002 1502,350 1169,197"/>
            <polygon points="937,197 695,522 714,1002 899,1002 1331,425 1321,197"/>
          </g>
          <g fill="#ecf1f6" clip-path="url(#clipTop)">
            <polygon points="507,197 523,596 1397,1002 1528,1002 1502,350 1169,197"/>
            <polygon points="937,197 695,522 714,1002 899,1002 1331,425 1321,197"/>
          </g>
          <polygon points="937,197 695,522 714,1002 899,1002 1331,425 1321,197" fill="#e7ebf3" clip-path="url(#clipFront)"/>
          <g fill="none" stroke="#87abd2" stroke-opacity=".65" stroke-width="2.200">
            <path d="M507 197l16 399 874 406M1169 197l333 153 26 652"/><path d="M937 197L695 522l19 480M1321 197l10 228-432 577"/>
          </g>
          <path d="M541 197L200 653.500M200 643l775 359M1296 1002l524-701-228-104" fill="none" stroke="#ffc57d" stroke-width="2.800"/>
          <text transform="matrix(.62 -.8 .1 .85 697 530)" font-size="17" fill="#2a52c4" font-family="Inter" textLength="39">Right</text>
          <g stroke="#222" stroke-width="1.200">
            <path d="M969 455v18a43.500 34.500 0 0 0 87 0v-18z" fill="url(#gRing)"/>
            <ellipse cx="1012.300" cy="454.500" rx="43.500" ry="34.500" fill="url(#gTop)"/>
            <path d="M1013 428l28 13v27.500l-29 12.500-28.500-13V441z" fill="#eaeef6"/>
            <path d="M983.500 441l29.500-13v19l-29 13.500z" fill="#7891a3"/>
            <path d="M1013 428l28 13v19l-28-13z" fill="#71899a"/>
          </g>
          <circle cx="1012.500" cy="473.500" r="4.300" fill="#fff" stroke="#000" stroke-width="1.800"/><circle cx="1012.500" cy="473.500" r="1.500"/>
          <g fill="#e1e8ef">
            <path d="M1830 212l7 10h-14zM1830 361l-7-10h14zM1755 287l10-7v14zM1905 287l-10-7v14z"/>
            <path d="M1809 220v5q-15 5-24 16l3 4-11 1v-11l4 2q11-12 28-17zM1851 220v5q15 5 24 16l-3 4 11 1v-11l-4 2q-11-12-28-17z"/>
            <path d="M1825 241q-7 0-13 8l-20 24q-4 7-3 14l5 28q3 5 8 6l32 11q7 2 13-3l20-26q3-4 2-10v-32q-1-7-8-9z"/>
          </g>
          <g fill="#fff">
            <path d="M1815 252q4-4 10-2l24 9q6 3 4 9l-8 17q-4 6-10 4l-25-8q-8-3-5-11z"/>
            <path d="M1800 289l26 9q7 3 7 10v11q0 7-6 5l-23-7q-6-3-7-9l-1-14q0-6 4-5z"/>
            <path d="M1848 291l14-17q4-3 4 3v23q0 5-4 10l-12 14q-6 4-6-3v-20q0-5 4-10z"/>
            <circle cx="1837.500" cy="298" r="7"/><ellipse cx="1797" cy="280" rx="4" ry="7"/><ellipse cx="1862" cy="265" rx="3" ry="7" transform="rotate(-30 1862 265)"/>
          </g>
          <path d="M1819 241v8M1845 284l8 3M1866 292h4" stroke="#fff" stroke-width="1.500"/>
          <g fill="#333" font-family="Open Sans"><text transform="matrix(.88 .36 -.25 .95 1820 270)" font-size="12">Top</text><text transform="matrix(.88 .33 .1 .95 1802 304)" font-size="11.500">Front</text><text transform="matrix(.55 -.75 .05 .85 1849 310)" font-size="11">Right</text></g>
          <path d="M1789 314l30-40" stroke="#4ab84a" stroke-width="1.200"/><path d="M1789 314l51 24" stroke="#d8222a" stroke-width="1.600"/><path d="M1789 314l-2-36" stroke="#2a2ad0" stroke-width="1.600"/>
          <text x="1783" y="278" font-size="14" fill="#3b3bdc" font-family="Roboto">Z</text><text x="1844" y="347" font-size="13" fill="#e03038" font-family="Roboto">X</text>
          <path d="M1867 348l8-4 9 3v11l-9 4-8-4z" fill="#fff" stroke="#444" stroke-width="1.200"/><path d="M1867 348l8 3v11l-8-4z" fill="#ccc"/><path d="M1875 351l9-4v11l-9 4z" fill="#999"/><path d="M1892 351h8l-4 4z" fill="#222"/>
          <g fill="none" stroke="#333" stroke-width="1.200"><path d="M1822.500 988.500h10v4.500h-10zM1832.500 993h4.500v-8.500M1825.500 990.500v2M1828 990.500v2M1830.500 990.500v2M1829 986v2"/><circle cx="1833" cy="985" r="3.700"/><circle cx="1833" cy="985" r="1.300"/><path d="M1855.500 994v-2a9.500 9 0 0 1 19 0v2zM1860 990.500q5-7 10 0zM1857.500 990h1"/><path d="M1893 993.500h14" stroke-width="2"/><path d="M1900 982v12M1894 984h12M1895 984l-2 6h4zM1905 984l-2 6h4z"/></g>
        </svg>
        <div class="toggle"><svg width="20" height="20" viewBox="0 0 20 20"><path d="M1 1.500l2.500 2.500L6 1.500M8 2.500h10M7 7.500h11M7 12.500h11M7 17.500h11" fill="none" stroke="#222" stroke-width="1.200"/><path d="M3.500 6v13" stroke="#999" stroke-width="2"/></svg></div>
        <div class="side">
          <div><svg viewBox="0 0 20 20"><path d="M2 13L9 1l5 3-7 12z" fill="#777"/><path d="M9 11l6-6 4 5-4 5z" fill="#999"/><path d="M.7 13h18.500v6H.7z" fill="#ddd" stroke="#888"/><path d="M.7 13h6.500v6H.7z" fill="#fff" stroke="#555"/><path d="M3 16h2" stroke="#333" stroke-width="2"/></svg></div>
          <div><svg viewBox="0 0 20 20"><path d="M12 4l7 3v9l-7 3.500L5 16V7zM5 7l7 3.500L19 7M12 10.500v9" fill="#fff" stroke="#333" stroke-width="1.300"/><use href="#grid" x="0" y="0" width="11" height="9" color="#1651b0"/></svg></div>
          <div><svg viewBox="0 0 20 20"><path d="M10 6l5 2v6l-5 2.500L5 14V8zM5 8l5 2 5-2M10 10v6M4 9q-2 0-2 2t-1.500 2q1.500 0 1.500 2t2 3M16 3q2 0 2 3t1.500 4q-1.500 0-1.500 4t-2 4" fill="none" stroke="#444" stroke-width="1.300"/><use href="#grid" width="11" height="9" color="#333"/></svg></div>
          <div class="var"><span>(x)</span><svg viewBox="0 0 20 20"><use href="#grid" width="11" height="9" color="#333"/></svg></div>
        </div>
      </main>
    </div>
    <div class="doctabs">
      <svg class="plus" viewBox="0 0 16 16"><path d="M8 0v16M0 8h16" stroke="#555" stroke-width="2.500"/></svg>
      <div class="dt"><svg><use href="#fold"/></svg>Drivetrain Parts</div>
      <div class="dt"><svg><use href="#fold"/></svg>Parts for Outtake</div>
      <div class="dt"><svg><use href="#part"/></svg>Wall Of The Intake</div>
      <div class="dt"><svg><use href="#asm"/></svg>Assembly 1</div>
      <div class="dt"><svg><use href="#part"/></svg>Plate For Pixels To Slid...</div>
      <div class="dt"><svg><use href="#part"/></svg>Bottom Guide For Pixel</div>
      <div class="dt"><svg><use href="#part"/></svg>Top Guide For Pixel</div>
      <div class="dt"><svg><use href="#part"/></svg>Intake Lift Side Walls</div>
      <div class="dt"><svg><use href="#part"/></svg>Plate Connecting Both ...</div>
      <div class="dt on"><svg><use href="#part"/></svg>4mm Spacer</div>
      <div class="dt"><svg><use href="#part"/></svg>4.8mm Spacer</div>
    </div>
  </div>
</div>

<footer class="taskbar">
  <div class="ti"><svg viewBox="0 0 24 24"><path d="M0 0h11.500v11.500H0zM12.500 0H24v11.500H12.500zM0 12.500h11.500V24H0zM12.500 12.500H24V24H12.500z" fill="url(#gWin)"/></svg></div>
  <div class="ti run"><svg viewBox="0 0 24 24"><path d="M0 3q0-2 2-2h6l3 3h11q2 0 2 2v15q0 2-2 2H2q-2 0-2-2z" fill="#ffd04a"/><path d="M0 3q0-2 2-2h6l2 2-2 2H0z" fill="#e5a000"/><path d="M4 23v-6q0-2 2-2h12q2 0 2 2v6z" fill="#1272c4"/></svg></div>
  <div class="ti"><svg viewBox="0 0 24 24"><path d="M12 .5q11.500 1 11.500 11T12 22q-2 0-4-.6L4 24v-4Q.5 17 .5 11.500.5 1.500 12 .5z" fill="url(#gMsg)"/><path d="M5 14l5-5 4 3 5-3-5 5.500-4-3z" fill="#fff" stroke="#fff"/></svg></div>
  <div class="ti on"><svg viewBox="0 0 24 24"><circle cx="12" cy="12" r="12" fill="#fcc934"/><path d="M1.600 6A12 12 0 0 0 12 24l5.200-9L12 12z" fill="#2ba24c"/><path d="M1.600 6L7 15l5-9h10.400A12 12 0 0 0 1.600 6z" fill="#e33b2e"/><circle cx="12" cy="12" r="5.800" fill="#fff"/><circle cx="12" cy="12" r="4.600" fill="#1a73e8"/></svg></div>
  <div class="ti"><svg viewBox="0 0 24 24"><circle cx="12" cy="12" r="12" fill="#1ed760"/><path d="M4.500 8.500q8-2.500 15 1.500M5.500 12.500q7-2 12.500 1.200M6 16q6-1.500 10.500 1.200" fill="none" stroke="#111" stroke-width="2.200" stroke-linecap="round"/></svg></div>
  <div class="ti"><svg viewBox="0 0 24 24"><circle cx="12" cy="12" r="12" fill="#5865f2"/><path d="M7 7q5-2 10 0 3 4 2.500 9l-3.500 1.500-1-1.500H9l-1 1.500L4.500 16Q4 11 7 7z" fill="#fff"/><circle cx="9.200" cy="12.500" r="1.600" fill="#5865f2"/><circle cx="14.800" cy="12.500" r="1.600" fill="#5865f2"/></svg></div>
  <div class="ti"><svg viewBox="0 0 24 24"><circle cx="12" cy="12" r="12" fill="#2f74f0"/><circle cx="12" cy="12" r="7.500" fill="none" stroke="#fff" stroke-width="1.400" stroke-dasharray="1.800 1"/><circle cx="12" cy="12" r="6" fill="#fff"/><path d="M6 14l-2 6 6-2z" fill="#fff"/></svg></div>
  <div class="ti"><svg viewBox="0 0 24 24"><path d="M2 1.500h20v21H2z" fill="#545454" stroke="#ddd0b8" stroke-width="2"/><path d="M6 5h3v9H6z" fill="#f25022"/><path d="M9 5h3v9H9z" fill="#ffc000"/><path d="M12 5h3v9h-3z" fill="#5cc030"/><path d="M15 5h3v9h-3z" fill="#00a0f0"/><path d="M6 16h3v3H6zM10.500 16h3v3h-3zM15 16h3v3h-3z" fill="#ddd0b8"/></svg></div>
  <div class="ti"><svg viewBox="0 0 24 24"><path d="M12 .6l10 5.700v11.400l-10 5.700-10-5.700V6.300z" fill="#080808" stroke="#ddd" stroke-width=".9"/><g fill="none" stroke-width="1.800"><path d="M12 4l7 4" stroke="#ff3b30"/><path d="M19 8v8" stroke="#b040ff"/><path d="M19 16l-7 4" stroke="#2f80ff"/><path d="M12 20l-7-4" stroke="#10c0d0"/><path d="M5 16V8" stroke="#40d040"/><path d="M5 8l7-4" stroke="#ffc000"/></g><path d="M9 9a4.500 4.500 0 1 0 6 0M12 6.500v6" fill="none" stroke="#fff" stroke-width="2"/></svg></div>
  <div class="ti"><svg viewBox="0 0 24 24"><path d="M10 1l5 9 8 7-10 3-11 3 4-10zM10 1L8 12l7 8M6 13l9-3-7 7 15 0M2 23l6-6-2-4" fill="none" stroke="#c4161c" stroke-width="1.400"/></svg></div>
  <div class="ti"><svg viewBox="0 0 24 24"><path d="M2 22l1.500-5.500A10.300 10.300 0 1 1 7.500 20.500z" fill="none" stroke="#25d366" stroke-width="2.300"/><path d="M8 6.500q1.500-.5 2 1l.6 1.800-1.200 1.400q1.500 3 4.200 4l1.400-1.300 2.600 1.300q0 3.300-3 3.300-6-1-8-7-.5-3.500 1.400-4.500z" fill="#25d366"/></svg></div>
  <div class="ti"><svg viewBox="0 0 24 24"><path d="M1 12q0-5 3-8l2 3 4-1Q11 2 14 0q1 4 4 5l2-1q4 5 3 10-2 10-11 10T1 12z" fill="url(#gFox)"/><circle cx="12" cy="13" r="6" fill="#7a3be0"/><path d="M5 9q4-2 7 1l-4 3q2 4 7 2-3 5-8 2-3-3-2-8z" fill="#ff8a1f"/></svg></div>
  <div class="tray">
    <svg class="up" viewBox="0 0 12 12"><path d="M1.500 8.500L6 4l4.500 4.500" fill="none" stroke="#fff" stroke-width="1.500"/></svg>
    <span class="eng">ENG</span>
    <svg class="net" viewBox="0 0 17 17"><path d="M10 2H1.500v10h12V8.500M7 12v3.500M3.500 15.500h8M12.500 1h3.500v5h-3.500zM14.200 6v3" fill="none" stroke="#fff" stroke-width="1.200"/></svg>
    <svg class="spk" viewBox="0 0 17 17"><path d="M1 6h3l4-4v13l-4-4H1z" fill="none" stroke="#fff" stroke-width="1.200"/><path d="M10 6q1.500 2.500 0 5" fill="none" stroke="#fff"/><path d="M12 4q3 4.500 0 9M14 2.500q4 6 0 12" fill="none" stroke="#666"/></svg>
    <div class="time">7:18 PM<br>7/2/2024</div>
    <svg class="nb" viewBox="0 0 16 18"><path d="M8 1q5 .5 5 6 0 4 2 6v1H1v-1q2-2 2-6 0-5.500 5-6zM6 15h4q-2 3-4 0z" fill="#9be9ff"/></svg>
  </div>
</footer>
</body>
</html>
```

FILE: styles.css
```css
* { box-sizing: border-box; }
body { margin: 0; width: 1920px; height: 1080px; overflow: hidden; display: flex; flex-direction: column; font-family: Roboto, "Noto Sans", sans-serif; color: #333; background: #fff; }
.defs { position: absolute; }
svg { flex: none; display: block; }

/* browser chrome */
.browser { height: 121px; background: #333; border-bottom: 1px solid #5a5a5a; font: 12px "Open Sans", sans-serif; color: #eee; letter-spacing: -.3px; flex: none; }
.tabstrip { height: 40px; padding-top: 6px; display: flex; align-items: flex-start; }
.tabdrop { width: 10px; height: 10px; margin: 9px 0 0 15px; }
.tab { width: 232px; height: 28px; margin-right: 6px; border-radius: 10px; background: #1a1a1a; display: flex; align-items: center; padding: 0 8px; }
.tab.active { background: none; margin-left: 15px; }
.fav { width: 16px; height: 16px; margin-right: 8px; }
.tab span { width: 169px; overflow: hidden; white-space: nowrap; color: #ddd; -webkit-mask-image: linear-gradient(90deg, #000 90%, transparent); mask-image: linear-gradient(90deg, #000 90%, transparent); }
.tab.t3 span { letter-spacing: -.26px; -webkit-mask-image: none; mask-image: none; }
.tab.active span { color: #fff; }
.close { width: 10px; height: 10px; margin-left: 10px; color: #eee; }
.newtab { width: 28px; height: 28px; border-radius: 50%; background: #1a1a1a; display: grid; place-items: center; }
.winbtns { margin: 13px 17px 0 auto; display: flex; gap: 34px; }
.winbtns svg { width: 12px; height: 12px; }
.address { height: 46px; display: flex; align-items: center; padding: 0 20px 0 14px; }
.nav { width: 16px; height: 16px; margin-right: 20px; }
.omni { width: 1662px; height: 34px; margin-left: -2px; border-radius: 17px; background: #1a1a1a; display: flex; align-items: center; padding: 0 16px 0 5px; }
.site { width: 24px; height: 24px; border-radius: 50%; background: #333; display: grid; place-items: center; }
.url { margin-left: 8px; font-size: 14px; letter-spacing: -.43px; color: #888; flex: 1; white-space: nowrap; }
.url b { font-weight: 400; color: #fff; }
.star { width: 17px; height: 17px; }
.ext { width: 18px; height: 18px; margin-left: 18px; }
.vline { width: 2px; height: 16px; background: #1a1a1a; flex: none; }
.address .vline { margin-left: 16px; }
.me { width: 20px; height: 20px; margin-left: 16px; border-radius: 50%; background: #455a64; display: grid; place-items: center; font-size: 11px; }
.dots { width: 4px; height: 16px; margin-left: 24px; }
.bookmarks { height: 28px; display: flex; align-items: center; padding-left: 12px; letter-spacing: -.24px; }
.group { width: 54px; height: 20px; border-radius: 6px; background: #564a2a; color: #fdf0c0; text-align: center; line-height: 19px; margin-right: 16px; }
.bookmarks .vline { margin-right: 16px; }
.bm { display: flex; align-items: center; gap: 6px; margin-right: 16px; white-space: nowrap; color: #fff; }
.bm svg { width: 16px; height: 16px; }
.bm:nth-child(3) { width: 83px; gap: 8px; }
.bm:nth-child(4) { width: 136px; }
.bm:nth-child(5) { width: 106px; }
.bm:nth-child(6) { width: 131px; }
.bm:nth-child(7) { width: 134px; }
.bm:nth-child(8) { width: 129px; }
.bm:nth-child(9) { width: 87px; }
.bm:nth-child(10) { width: 131px; }
.bm:nth-child(11) { width: 139px; gap: 8px; }
.bm:nth-child(12), .bm:nth-child(13) { width: 137px; }
.more { width: 12px; height: 12px; margin-left: 136px; margin-right: 17px; }
.bm.all { gap: 8px; }

/* document title bar */
.titlebar { height: 40px; background: #fafafa; display: flex; align-items: center; padding-left: 4px; flex: none; white-space: nowrap; }
.logo { width: 21px; height: 23px; margin-top: -1px; }
.brand { width: 82px; padding-left: 6px; font: 18px "Open Sans", sans-serif; letter-spacing: -.6px; color: #666; line-height: 18px; margin-top: -3px; }
.burger { width: 16px; height: 16px; margin: 2px 12px 0 6px; }
h1 { margin: 2px 0 0; width: 235px; font-size: 23px; font-weight: 700; letter-spacing: -.4px; }
.main { width: 44px; font-size: 16px; color: #999; margin-top: 6px; }
.link, .cap { width: 16px; height: 16px; }
.cap { margin-left: 33px; }
.acts { margin-left: 1022px; display: flex; gap: 12.100px; width: 158px; margin-top: 3px; color: #555; }
.acts .l { width: 20px; height: 20px; }
.bell { position: relative; }
.bell b { position: absolute; left: 10px; top: -6px; width: 16px; height: 16px; background: #1651b0; color: #fff; border-radius: 2px; font: 700 11px/16px Roboto; text-align: center; }
.share { width: 60px; height: 33px; background: #1651b0; border-radius: 4px; color: #fff; font-size: 15.500px; font-weight: 500; line-height: 33px; text-align: center; }
.help { width: 18px; height: 18px; margin: 2px 7px 0 11px; border-radius: 50%; background: #666; color: #fff; font: 700 15px/18px Roboto; text-align: center; }
.caret { border: 4px solid transparent; border-top: 5px solid #333; border-bottom: 0; }
.avatar { width: 24px; height: 24px; margin: 0 6px 0 12px; }
.user { font-size: 15px; width: 95px; letter-spacing: -.3px; }

/* application */
.app { height: 871px; display: flex; flex: none; }
.rail { width: 40px; background: #fafafa; border-right: 1px solid #d4d4d4; border-top: 1px solid #d4d4d4; display: flex; flex-direction: column; align-items: center; flex: none; }
.rail svg { width: 20px; height: 20px; }
.rail .r0 { margin-top: 7px; }
.rail .r1 { margin-top: 15px; }
.rail .r2 { margin-top: 14px; }
.rail .r3 { margin-top: 15px; }
.rail i { width: 39px; height: 1px; background: #d4d4d4; margin: 8px 0; }
.rail .r5 { margin-top: auto; margin-bottom: 4px; }
.work { flex: 1; min-width: 0; display: flex; flex-direction: column; }
.toolbar { height: 36px; background: #fff; display: flex; align-items: center; flex: none; }
.toolbar .c { width: 34px; display: grid; place-items: center; flex: none; }
.toolbar .c > svg { width: 20px; height: 20px; }
.toolbar .v { width: 18px; padding-left: 2px; flex: none; }
.toolbar .v svg { width: 12px; height: 12px; }
.toolbar > i { width: 2px; height: 26px; margin: 0 1px; background: #d4d4d4; flex: none; }
.sketch { width: 86px; padding-left: 9px; display: flex; align-items: center; gap: 4px; font-size: 15px; letter-spacing: -.5px; flex: none; }
.sketch svg { width: 19px; height: 19px; }
.var { font: italic 700 18px "DejaVu Serif", "Liberation Serif", serif; letter-spacing: -1.500px; }
.toolbar .var { font-size: 15px; }
.vo { width: 20px; height: 20px; border: 1px solid #777; border-radius: 3px; font: 12px/18px Roboto; color: #333; padding-left: 2px; position: relative; }
.vo svg { position: absolute; left: 11px; top: -1px; width: 13px; height: 13px; }
.search { width: 160px; height: 32px; margin-left: 11px; background: #eee; border-radius: 3px; display: flex; align-items: center; padding-left: 10px; font-size: 15px; letter-spacing: -.25px; }
.search span { width: 90px; font-size: 14.500px; }
kbd { height: 19px; font: 11px/17px Roboto, "DejaVu Sans"; border: 1px solid #999; border-bottom-width: 2px; border-radius: 2px; padding: 0 2px; width: 33px; margin-top: 2px; white-space: nowrap; letter-spacing: -.2px; }
kbd + kbd { width: 17px; padding-left: 5px; }
.body { height: 805px; display: flex; }
.panel { width: 206px; border-right: 1px solid #ccc; border-top: 1px solid #d4d4d4; border-bottom: 1px solid #d4d4d4; font-size: 14px; letter-spacing: -.1px; display: flex; flex-direction: column; flex: none; }
.head { height: 30px; padding-left: 4px; display: flex; align-items: center; font-weight: 500; gap: 10.500px; }
.head span { width: 120px; letter-spacing: -.2px; }
.filter { height: 30px; display: flex; align-items: center; padding-left: 10px; gap: 11px; }
.input { width: 158px; height: 30px; border: 1px solid #999; border-radius: 3px; padding-left: 6px; line-height: 28px; font-style: italic; color: #777; letter-spacing: -.15px; }
.row { height: 26px; display: flex; align-items: center; flex: none; }
.row svg { width: 16px; height: 16px; margin-right: 4px; }
.grp { padding-left: 3px; }
.row .tw { width: 14px; height: 14px; margin-right: 6px; }
.kids { margin-left: 9px; border-left: 1px solid #ccc; height: 104px; padding-left: 15px; }
.kids::after { content: ""; display: block; width: 9px; height: 1px; background: #ccc; margin: -1px 0 0 -19px; }
.feat { padding-left: 6px; letter-spacing: -.2px; }
.dim { color: #aaa; }
.dim svg { opacity: .45; }
.bar { width: 190px; height: 7px; margin: 10px 0 0 5px; background: #c1c1c1; }
.parts { width: 200px; margin-top: auto; height: 282px; border-top: 1px solid #ccc; }
.p1 { padding-left: 25px; }
.view { width: 1674px; position: relative; overflow: hidden; }
.toggle { position: absolute; left: -1px; top: 377px; width: 33px; height: 34px; background: #fff; border: 1px solid #999; border-left: 0; padding: 7px 0 0 7px; }
.side { position: absolute; right: 0; top: 328px; width: 32px; border: 1px solid #999; border-right: 0; background: #fff; }
.side div { height: 33px; border-bottom: 1px solid #999; padding: 7px 0 0 6px; position: relative; }
.side div:last-child { border: 0; padding: 6px 0 0 4px; font-size: 16px; line-height: 22px; }
.side svg { width: 20px; height: 20px; }
.side .var svg { position: absolute; left: 6px; top: 6px; }
.doctabs { height: 30px; background: #d6d6d6; display: flex; align-items: flex-start; padding-left: 9px; }
.plus { width: 16px; height: 16px; margin: 6px 14px 0 0; }
.dt { height: 27px; margin-right: 2px; background: #e8e8e8; border-radius: 0 0 5px 5px; box-shadow: 0 1px 2px #aaa; display: flex; align-items: center; gap: 3px; padding-left: 11px; font-size: 15px; letter-spacing: -.42px; color: #666; white-space: nowrap; flex: none; }
.dt svg { width: 19px; height: 19px; }
.dt.on { background: #fff; color: #333; box-shadow: inset 0 -2px #1651b0; }
.dt:nth-child(2) { width: 150px; letter-spacing: -.3px; }
.dt:nth-child(3) { width: 158px; }
.dt:nth-child(4) { width: 165px; }
.dt:nth-child(5) { width: 124px; }
.dt:nth-child(6) { width: 200px; }
.dt:nth-child(7) { width: 194px; }
.dt:nth-child(8) { width: 172px; }
.dt:nth-child(9) { width: 182px; }
.dt:nth-child(10) { width: 200px; }
.dt:nth-child(11) { width: 131px; }
.dt:nth-child(12) { width: 143px; }

/* desktop taskbar */
.taskbar { height: 48px; background: #1c1c1c; border-top: 1px solid #3a3a3a; display: flex; align-items: center; padding-left: 13px; flex: none; color: #fff; font: 12px/16px "Open Sans", sans-serif; }
.ti { width: 40px; height: 40px; margin-right: 4px; border-radius: 4px; display: grid; place-items: center; position: relative; flex: none; }
.ti svg { width: 24px; height: 24px; }
.ti.on { background: #2b2b2b; }
.ti.on::after, .ti.run::after { content: ""; position: absolute; bottom: 1px; left: 12px; width: 16px; height: 3px; border-radius: 2px; background: #4cc2ff; }
.ti.run::after { left: 17px; width: 6px; background: #999; }
.tray { margin-left: auto; display: flex; align-items: center; height: 48px; letter-spacing: -.2px; }
.up { width: 12px; height: 12px; margin-right: 20px; }
.eng { width: 41px; }
.net { width: 18px; height: 18px; margin-right: 7px; }
.spk { width: 17px; height: 17px; }
.time { width: 64px; text-align: right; margin-right: 6px; }
.nb { width: 17px; height: 19px; margin-right: 20px; }
```
